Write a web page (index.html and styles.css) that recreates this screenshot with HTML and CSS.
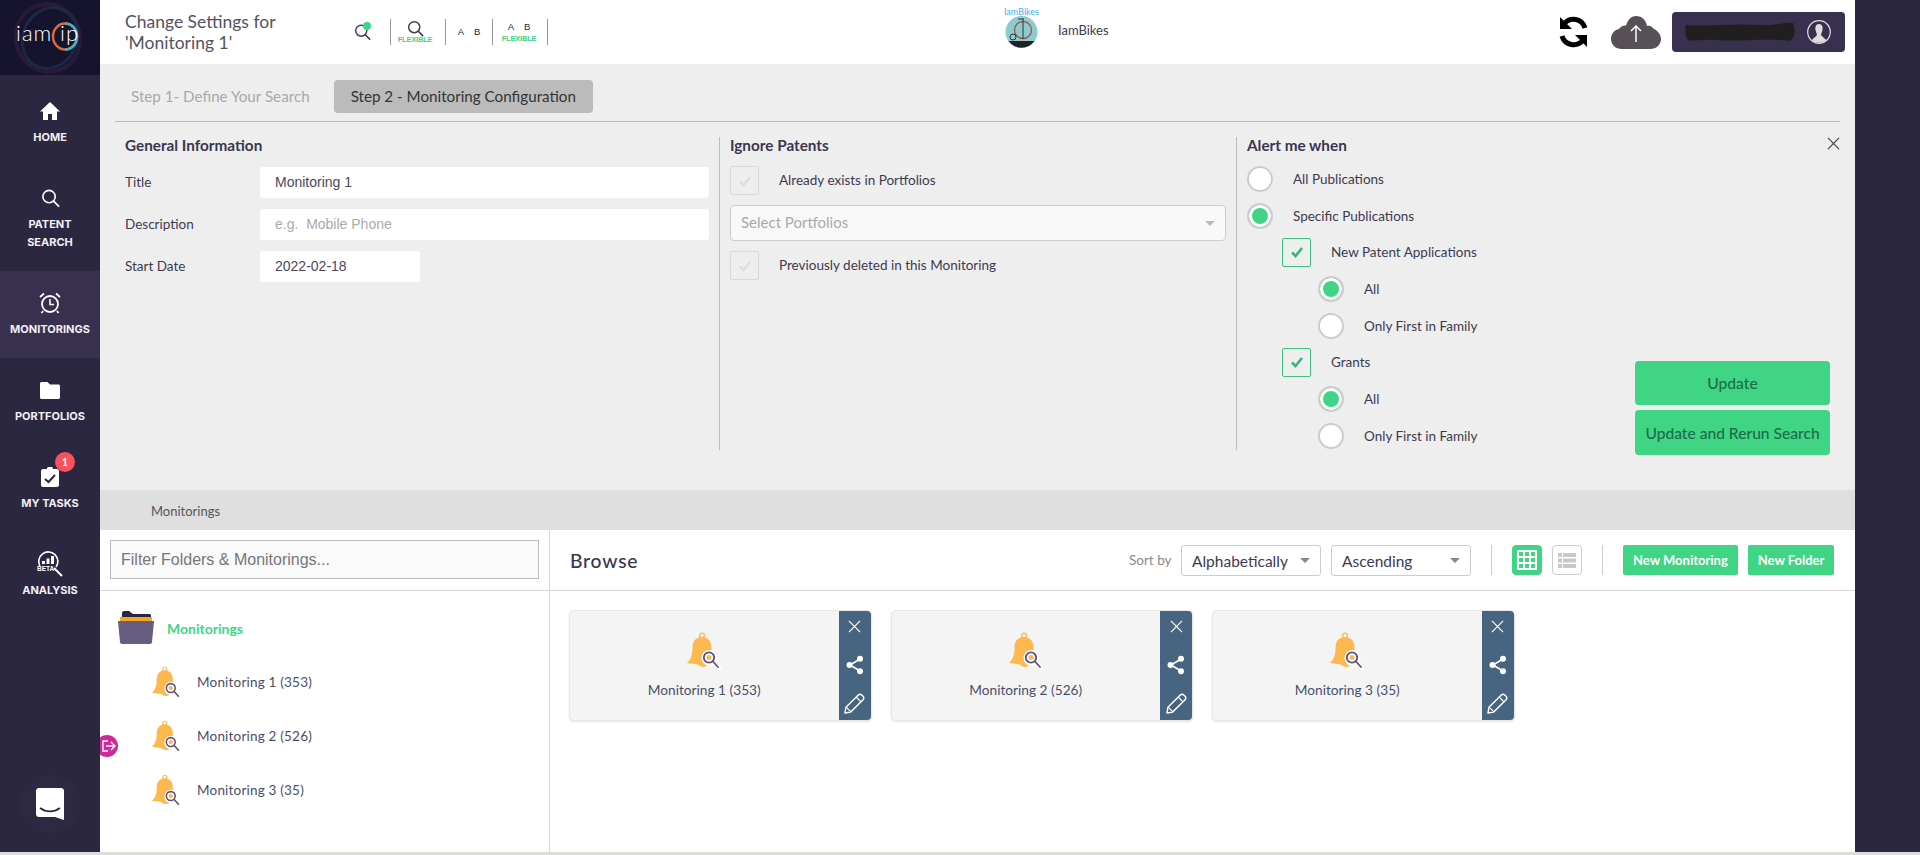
FILE: index.html
```html
<!DOCTYPE html>
<html lang="en">
<head>
  <meta charset="UTF-8">
  <title>Change Settings for 'Monitoring 1'</title>
  <link rel="stylesheet" href="styles.css">
</head>
<body>
  <!-- shared icons -->
  <svg class="defs" width="0" height="0">
    <symbol id="i-bell" viewBox="0 0 34 38">
      <circle cx="15" cy="3.5" r="2.4" fill="none" stroke="#fdb94f" stroke-width="1.4"/>
      <path d="M15 5C8 5 5.5 10 5.5 16C5.500 23 4 27 0 31L11 32.500C13 35.500 19 35.500 21 33L30 28C26 24 24.500 20 24.500 16C24.500 10 22 5 15 5Z" fill="#fdb94f"/>
      <circle cx="22.500" cy="26" r="8" fill="#fff"/>
      <path d="M27 31L32 36" stroke="#fff" stroke-width="4" stroke-linecap="round"/>
      <circle cx="22" cy="25.500" r="5.200" fill="none" stroke="#5c4f78" stroke-width="1.800"/>
      <circle cx="22" cy="25.500" r="2.500" fill="#fdb94f"/>
      <path d="M26 29.500L31 35" stroke="#5c4f78" stroke-width="1.800" stroke-linecap="round"/>
    </symbol>
    <symbol id="i-check" viewBox="0 0 14 14">
      <path d="M2 7.500L5.500 11L12 3" fill="none" stroke="currentColor" stroke-width="2.600"/>
    </symbol>
    <symbol id="i-search" viewBox="0 0 20 20">
      <circle cx="8.500" cy="8.500" r="6.500" fill="none" stroke="currentColor" stroke-width="1.700"/>
      <path d="M13 13L19 19" stroke="currentColor" stroke-width="1.900"/>
    </symbol>
    <symbol id="i-close" viewBox="0 0 14 14">
      <path d="M1 1L13 13M13 1L1 13" stroke="currentColor" stroke-width="1.300"/>
    </symbol>
    <symbol id="i-share" viewBox="0 0 18 20">
      <path d="M14 4L4 10L14 16" fill="none" stroke="currentColor" stroke-width="1.500"/>
      <circle cx="14" cy="3.800" r="3" fill="currentColor"/>
      <circle cx="3.500" cy="10" r="3" fill="currentColor"/>
      <circle cx="14" cy="16.200" r="3" fill="currentColor"/>
    </symbol>
    <symbol id="i-pencil" viewBox="0 0 22 22">
      <path d="M2 15L15 2C16 1 17.500 1 18.500 2L20 3.500C21 4.500 21 6 20 7L7 20L1 21Z" fill="none" stroke="currentColor" stroke-width="1.500" stroke-linejoin="round"/>
      <path d="M13 4.500L17.500 9M2.500 15L7 19.500" stroke="currentColor" stroke-width="1.300"/>
    </symbol>
  </svg>

  <div class="app">
    <aside class="sidebar">
      <div class="logo">
        <svg width="100" height="75" viewBox="0 0 100 75">
          <ellipse cx="48" cy="38" rx="32" ry="34" fill="none" stroke="#3b2340" stroke-width="4" opacity="0.55" transform="rotate(-20 48 38)"/>
          <ellipse cx="50" cy="38" rx="27" ry="31" fill="none" stroke="#1f2c4a" stroke-width="3" opacity="0.8" transform="rotate(25 50 38)"/>
          <ellipse cx="65" cy="36.500" rx="12" ry="13" fill="none" stroke="#d9673f" stroke-width="2.500"/>
          <path d="M65 23.500C72 23.500 77 29 77 36.500C77 44 72 49.500 65 49.500" fill="none" stroke="#36b6c4" stroke-width="2.500"/>
          <text x="16" y="41" class="logo-text">iam</text>
          <text x="60" y="41" class="logo-text">ip</text>
        </svg>
      </div>
      <nav class="nav">
        <a class="nav-item">
          <span class="nav-icon"><svg width="20" height="20" viewBox="0 0 20 20"><path d="M10 1L0 10.500H3V19H8V13H12V19H17V10.500H20Z" fill="#fff"/></svg></span>
          <span class="nav-label">HOME</span>
        </a>
        <a class="nav-item">
          <span class="nav-icon nav-white"><svg width="19" height="20"><use href="#i-search"/></svg></span>
          <span class="nav-label">PATENT<br>SEARCH</span>
        </a>
        <a class="nav-item active">
          <span class="nav-icon"><svg width="22" height="22" viewBox="0 0 22 22"><circle cx="11" cy="12" r="8" fill="none" stroke="#fff" stroke-width="1.800"/><path d="M11 7V12.500H15" fill="none" stroke="#fff" stroke-width="1.500"/><path d="M1 5L5 1.500M21 5L17 1.500M4 19L2.500 21M18 19L19.500 21" stroke="#fff" stroke-width="1.800"/></svg></span>
          <span class="nav-label">MONITORINGS</span>
        </a>
        <a class="nav-item">
          <span class="nav-icon"><svg width="20" height="17" viewBox="0 0 20 17"><path d="M1.500 0H7.500L10 2.500H18.500C19.300 2.500 20 3.200 20 4V15.500C20 16.300 19.300 17 18.500 17H1.500C0.700 17 0 16.300 0 15.500V1.500C0 0.700 0.700 0 1.500 0Z" fill="#fff"/></svg></span>
          <span class="nav-label">PORTFOLIOS</span>
        </a>
        <a class="nav-item">
          <span class="nav-icon"><svg width="18" height="20" viewBox="0 0 18 20"><path d="M2 2H6A3 2.500 0 0 1 12 2H16C17 2 18 3 18 4V18C18 19 17 20 16 20H2C1 20 0 19 0 18V4C0 3 1 2 2 2Z" fill="#fff"/><path d="M4 12L7.500 15L14 8" fill="none" stroke="#2c2740" stroke-width="2"/></svg></span>
          <span class="nav-label">MY TASKS</span>
          <span class="badge">1</span>
        </a>
        <a class="nav-item">
          <span class="nav-icon"><svg width="26" height="26" viewBox="0 0 26 26"><path d="M3 15A9.500 9.500 0 1 1 19 16" fill="none" stroke="#fff" stroke-width="1.600"/><path d="M17 17L25 25" stroke="#fff" stroke-width="2"/><rect x="5" y="10" width="3" height="3" fill="#fff"/><rect x="9.500" y="7.500" width="3" height="5.500" fill="#fff"/><rect x="14" y="5" width="3" height="8" fill="#fff"/><text x="0" y="19.500" class="beta">BETA</text></svg></span>
          <span class="nav-label">ANALYSIS</span>
        </a>
      </nav>
      <div class="chat">
        <svg width="28" height="32" viewBox="0 0 28 32"><path d="M3 0H25C26.700 0 28 1.300 28 3V32L19 29H3C1.300 29 0 27.700 0 26V3C0 1.300 1.300 0 3 0Z" fill="#fff"/><path d="M4 20C10 24.500 18 24.500 24 20" fill="none" stroke="#2c2740" stroke-width="1.600"/></svg>
      </div>
    </aside>

    <div class="content">
      <header class="topbar">
        <div class="page-title">Change Settings for<br>'Monitoring 1'</div>
        <div class="tools">
          <div class="tool tool-first">
            <svg width="17" height="18"><use href="#i-search"/></svg>
            <span class="tool-dot"></span>
          </div>
          <div class="tool">
            <svg width="17" height="17"><use href="#i-search"/></svg>
            <span class="flex-tag">FLEXIBLE</span>
          </div>
          <div class="tool"><span class="ab">A</span><span class="ab">B</span></div>
          <div class="tool tool-ab-flex"><div class="ab-pair"><span class="ab">A</span><span class="ab">B</span></div><span class="flex-tag">FLEXIBLE</span></div>
        </div>
        <div class="tenant">
          <div class="tenant-logo">
            <span class="tenant-small">IamBikes</span>
            <svg width="37" height="32" viewBox="0 0 37 32"><circle cx="18.500" cy="16" r="16" fill="#8ccbd3"/><path d="M5.500 25H31.500A16 16 0 0 1 5.500 25Z" fill="#222"/><circle cx="20" cy="14" r="8.500" fill="none" stroke="#a5562d" stroke-width="1.300"/><path d="M20 3V23M15 3H21" stroke="#333" stroke-width="1"/><circle cx="10" cy="21" r="3" fill="none" stroke="#333" stroke-width="1"/></svg>
          </div>
          <span class="tenant-name">IamBikes</span>
        </div>
        <div class="top-right">
          <svg width="31" height="32" viewBox="0 0 31 32"><path d="M27 12A12 12 0 0 0 6 8" fill="none" stroke="#000" stroke-width="5"/><path d="M2 1V13H14Z" fill="#000"/><path d="M4 20A12 12 0 0 0 25 24" fill="none" stroke="#000" stroke-width="5"/><path d="M29 31V19H17Z" fill="#000"/></svg>
          <svg class="cloud" width="50" height="33" viewBox="0 0 50 33"><path d="M11 33C4 33 0 28 0 23C0 18 3 14 8 13C10 10 13 9 15 9.500C17 3 21 0 25 0C31 0 35 4 36 10C38 9 41 10 43 13C47 15 50 19 50 23C50 28 46 33 39 33Z" fill="#575056"/><path d="M25 26V10M20 15L25 10L30 15" fill="none" stroke="#fff" stroke-width="1.500"/></svg>
          <div class="user-box">
            <svg width="110" height="20" viewBox="0 0 110 20"><path d="M1 3C20 5 50 1 74 3C90 4 100 0 108 1C111 7 110 16 105 19C80 16 50 20 30 18C15 17 6 20 3 18C0 14 0 8 1 3Z" fill="#1f1f1f"/></svg>
            <svg width="24" height="24" viewBox="0 0 24 24"><circle cx="12" cy="12" r="11.300" fill="#393050" stroke="#ddd" stroke-width="1.200"/><path d="M12 4C15 4 16 7 15.500 10C15 12 14 14 14 15C15 17 18 18 19 20C16 23.500 8 23.500 5 20C6 18 9 17 10 15C10 14 9 12 8.500 10C8 7 9 4 12 4Z" fill="#ddd"/></svg>
          </div>
        </div>
      </header>

      <section class="panel">
        <div class="steps">
          <span class="step">Step 1- Define Your Search</span>
          <span class="step step-on">Step 2 - Monitoring Configuration</span>
        </div>
        <div class="columns">
          <div class="col col-info">
            <h4>General Information</h4>
            <div class="form-row"><label>Title</label><input class="text-input" type="text" value="Monitoring 1"></div>
            <div class="form-row"><label>Description</label><input class="text-input" type="text" placeholder="e.g.  Mobile Phone"></div>
            <div class="form-row"><label>Start Date</label><input class="text-input date-input" type="text" value="2022-02-18"></div>
          </div>
          <div class="col col-ignore">
            <h4>Ignore Patents</h4>
            <div class="check-row">
              <span class="box box-off"><svg width="14" height="14"><use href="#i-check"/></svg></span>
              <span class="row-text">Already exists in Portfolios</span>
            </div>
            <div class="portfolio-select">Select Portfolios<span class="caret"></span></div>
            <div class="check-row">
              <span class="box box-off"><svg width="14" height="14"><use href="#i-check"/></svg></span>
              <span class="row-text">Previously deleted in this Monitoring</span>
            </div>
          </div>
          <div class="col col-alert">
            <div>
              <h4>Alert me when</h4>
              <div class="alert-list">
                <div class="check-row"><span class="radio"></span><span>All Publications</span></div>
                <div class="check-row"><span class="radio radio-on"></span><span>Specific Publications</span></div>
                <div class="check-row sub"><span class="box box-on"><svg width="14" height="14"><use href="#i-check"/></svg></span><span>New Patent Applications</span></div>
                <div class="check-row subsub"><span class="radio radio-on"></span><span>All</span></div>
                <div class="check-row subsub"><span class="radio"></span><span>Only First in Family</span></div>
                <div class="check-row sub"><span class="box box-on"><svg width="14" height="14"><use href="#i-check"/></svg></span><span>Grants</span></div>
                <div class="check-row subsub"><span class="radio radio-on"></span><span>All</span></div>
                <div class="check-row subsub"><span class="radio"></span><span>Only First in Family</span></div>
              </div>
            </div>
            <div class="actions">
              <button class="btn-update btn-first">Update</button>
              <button class="btn-update">Update and Rerun Search</button>
            </div>
          </div>
        </div>
        <svg class="panel-close" width="13" height="13"><use href="#i-close"/></svg>
      </section>

      <div class="tabbar">Monitorings</div>

      <section class="browser">
        <div class="tree-pane">
          <div class="filter-wrap"><input class="filter" type="text" placeholder="Filter Folders &amp; Monitorings..."></div>
          <div class="tree">
            <div class="tree-root">
              <svg width="36" height="33" viewBox="0 0 36 33"><path d="M4 7V2C4 1 5 0 6 0H11L15 3H32C33 3 33 4 33 7Z" fill="#2c2740"/><rect x="2" y="6" width="32" height="6" fill="#f5a623"/><path d="M0 10H36L34 31C34 32 33 33 32 33H4C3 33 2 32 2 31Z" fill="#665d80"/></svg>
              <span>Monitorings</span>
            </div>
            <div class="tree-item"><svg width="29" height="33"><use href="#i-bell"/></svg><span>Monitoring 1 (353)</span></div>
            <div class="tree-item"><svg width="29" height="33"><use href="#i-bell"/></svg><span>Monitoring 2 (526)</span></div>
            <div class="tree-item"><svg width="29" height="33"><use href="#i-bell"/></svg><span>Monitoring 3 (35)</span></div>
          </div>
        </div>
        <div class="browse-pane">
          <div class="browse-head">
            <h2>Browse</h2>
            <span class="sort-label">Sort by</span>
            <div class="sort-select">Alphabetically<span class="caret"></span></div>
            <div class="sort-select">Ascending<span class="caret"></span></div>
            <span class="head-sep"></span>
            <span class="view-btn view-on"><svg width="20" height="20" viewBox="0 0 20 20"><path d="M1 1H19V19H1ZM7 1V19M13 1V19M1 7H19M1 13H19" fill="none" stroke="#fff" stroke-width="2"/></svg></span>
            <span class="view-btn"><svg width="18" height="15" viewBox="0 0 18 15"><path d="M0 0H4V4H0ZM5 0H18V4H5ZM0 5.500H4V9.500H0ZM5 5.500H18V9.500H5ZM0 11H4V15H0ZM5 11H18V15H5Z" fill="#c8c8c8"/></svg></span>
            <span class="head-sep"></span>
            <button class="btn-new">New Monitoring</button>
            <button class="btn-new">New Folder</button>
          </div>
          <div class="cards">
            <div class="card">
              <div class="card-main"><svg width="34" height="38"><use href="#i-bell"/></svg><span>Monitoring 1 (353)</span></div>
              <div class="card-side"><svg width="13" height="13"><use href="#i-close"/></svg><svg width="18" height="20"><use href="#i-share"/></svg><svg width="21" height="21"><use href="#i-pencil"/></svg></div>
            </div>
            <div class="card">
              <div class="card-main"><svg width="34" height="38"><use href="#i-bell"/></svg><span>Monitoring 2 (526)</span></div>
              <div class="card-side"><svg width="13" height="13"><use href="#i-close"/></svg><svg width="18" height="20"><use href="#i-share"/></svg><svg width="21" height="21"><use href="#i-pencil"/></svg></div>
            </div>
            <div class="card">
              <div class="card-main"><svg width="34" height="38"><use href="#i-bell"/></svg><span>Monitoring 3 (35)</span></div>
              <div class="card-side"><svg width="13" height="13"><use href="#i-close"/></svg><svg width="18" height="20"><use href="#i-share"/></svg><svg width="21" height="21"><use href="#i-pencil"/></svg></div>
            </div>
          </div>
        </div>
        <span class="drawer-toggle"><svg width="14" height="12" viewBox="0 0 14 12"><path d="M6 1H1V11H6M4 6H13M9 2L13 6L9 10" fill="none" stroke="#fff" stroke-width="1.300"/></svg></span>
      </section>
    </div>

    <div class="side-band"></div>
  </div>
</body>
</html>
```

FILE: styles.css
```css
* { box-sizing: border-box; }
html, body { margin: 0; height: 100%; overflow: hidden; }
body {
  font-family: "Lato", "Liberation Sans", sans-serif;
  font-size: 13.5px;
  color: #3d3a50;
  background: #e0dad8;
}
.defs { position: absolute; }
h4 {
  margin: 0 0 13px;
  font-size: 15.300px;
  line-height: 16px;
  font-weight: 700;
  color: #3a3650;
}

.app { display: flex; height: 852px; }

/* sidebar */
.sidebar {
  width: 100px;
  flex: none;
  background: #2c2740;
  display: flex;
  flex-direction: column;
  position: relative;
  z-index: 2;
}
.logo { height: 75px; margin-bottom: 4px; background: #15132d; }
.logo svg { display: block; }
.logo-text { font-family: "Lato", sans-serif; font-size: 22px; font-weight: 300; letter-spacing: 1px; fill: #fff; }
.beta { font-family: "Liberation Sans", sans-serif; font-size: 6.500px; font-weight: 700; fill: #fff; }
.nav-item {
  display: flex;
  flex-direction: column;
  align-items: center;
  padding: 20px 0;
  position: relative;
  color: #f1f0f4;
}
.nav-item.active { background: #393050; }
.nav-icon { height: 24px; display: flex; align-items: center; justify-content: center; }
.nav-white { color: #fff; }
.nav-label {
  margin-top: 5px;
  font-family: "Inter", sans-serif;
  font-size: 11px;
  line-height: 18px;
  font-weight: 700;
  text-align: center;
}
.badge {
  position: absolute;
  top: 7px;
  left: 55px;
  width: 20px;
  height: 20px;
  border-radius: 50%;
  background: #f9525d;
  color: #fff;
  font-size: 11px;
  font-weight: 700;
  line-height: 20px;
  text-align: center;
}
.chat {
  width: 60px;
  height: 60px;
  margin: auto 20px 18px;
  border-radius: 50%;
  background: #2e2942;
  display: flex;
  align-items: center;
  justify-content: center;
}

.content { width: 1755px; flex: none; display: flex; flex-direction: column; }
.side-band { flex: 1; background: #2c2740; }

/* top bar */
.topbar {
  height: 64px;
  flex: none;
  background: #fff;
  display: flex;
  align-items: center;
  padding: 0 10px 0 25px;
}
.page-title { width: 229px; font-size: 17.500px; line-height: 21px; color: #55525f; }
.tools { display: flex; height: 26px; }
.tool {
  position: relative;
  width: 47px;
  display: flex;
  align-items: center;
  justify-content: center;
  gap: 10px;
  border-right: 1px solid #999;
  color: #3f3d56;
}
.tool:nth-child(2) { width: 55px; flex-direction: column; gap: 0; padding-right: 6px; }
.tool-ab-flex { width: 55px; flex-direction: column; gap: 0; padding-right: 2px; }
.tool-first { width: 37px; justify-content: flex-start; }
.tool-dot {
  position: absolute;
  top: 3px;
  left: 9px;
  width: 8px;
  height: 8px;
  border-radius: 50%;
  background: #40d485;
}
.flex-tag {
  font-family: "Liberation Sans", sans-serif;
  font-size: 7.500px;
  font-weight: 700;
  line-height: 8px;
  letter-spacing: -0.200px;
  color: #40d485;
  margin-top: -1px;
  white-space: nowrap;
}
.ab-pair { display: flex; gap: 10px; margin-bottom: 3px; }
.ab { font-family: "Liberation Sans", sans-serif; font-size: 9.500px; line-height: 12px; color: #22284a; }
.tenant { margin-left: 455px; display: flex; align-items: center; gap: 18px; }
.tenant-logo { width: 37px; display: flex; flex-direction: column; align-items: center; margin-bottom: 9px; }
.tenant-logo svg { display: block; }
.tenant-small { font-size: 9px; line-height: 9px; color: #49aef0; white-space: nowrap; }
.tenant-name { font-size: 13px; color: #3d3a50; margin-top: -4px; }
.top-right { margin-left: auto; display: flex; align-items: center; }
.cloud { margin: 0 11px 0 22px; }
.user-box {
  width: 173px;
  height: 40px;
  background: #393050;
  border-radius: 4px;
  display: flex;
  align-items: center;
  justify-content: space-between;
  padding: 0 14px 0 13px;
}

/* settings panel */
.panel {
  position: relative;
  height: 426px;
  flex: none;
  background: #eee;
  padding: 16px 15px 0;
}
.steps {
  display: flex;
  align-items: center;
  height: 33px;
  padding-left: 1px;
  font-size: 15.200px;
}
.step { padding: 0 15px; line-height: 33px; color: #a9a9a9; white-space: nowrap; }
.step-on {
  margin-left: 9px;
  padding: 0 17px;
  background: #bbb;
  border-radius: 4px;
  color: #333;
}
.columns {
  display: grid;
  grid-template-columns: 604px 517px 604px;
  height: 329px;
  margin-top: 8px;
  border-top: 1px solid #bbb;
  padding-top: 15px;
}
.col { height: 313px; font-size: 13.500px; }
.col-info { padding: 0 10px; }
.col-ignore { padding: 0 10px; border-left: 1px solid #bbb; }
.col-alert {
  padding: 0 10px;
  border-left: 1px solid #bbb;
  display: flex;
  justify-content: space-between;
}
.form-row { display: flex; align-items: center; margin-bottom: 11px; }
.col-info h4 { margin-bottom: 14px; }
.form-row label { width: 135px; flex: none; padding-bottom: 2px; }
.text-input {
  width: 449px;
  height: 31px;
  border: 0;
  border-radius: 3px;
  background: #fff;
  padding: 0 15px 2px;
  font-family: "Liberation Sans", sans-serif;
  font-size: 14px;
  color: #4a4860;
}
.text-input::placeholder { color: #aaa; }
.date-input { width: 160px; }
.check-row { display: flex; align-items: center; gap: 20px; }
.row-text { padding-bottom: 2px; }
.col-ignore .check-row { height: 29px; }
.box {
  width: 29px;
  height: 29px;
  flex: none;
  border-radius: 2px;
  display: flex;
  align-items: center;
  justify-content: center;
}
.box-off { border: 1px solid #d8d8d8; color: #dfdfdf; }
.box-on { border: 1px solid #3fc07f; color: #35b873; }
.portfolio-select {
  position: relative;
  height: 36px;
  margin: 10px 0;
  padding-left: 10px;
  background: #f9f9f9;
  border: 1px solid #ccc;
  border-radius: 4px;
  font-size: 15px;
  line-height: 32px;
  color: #aaa;
}
.caret {
  position: absolute;
  right: 10px;
  top: 50%;
  margin-top: -2px;
  border: 5px solid transparent;
  border-top-color: #bbb;
  border-bottom: 0;
}
.alert-list { display: flex; flex-direction: column; gap: 10.700px; }
.radio {
  width: 26px;
  height: 26px;
  flex: none;
  border-radius: 50%;
  background: #fff;
  border: 2px solid #ccc;
}
.radio-on { background: #40d485; box-shadow: inset 0 0 0 3px #fff; }
.sub { margin-left: 35px; }
.subsub { margin-left: 71px; }
.col-alert .check-row { gap: 20px; height: 26px; }
.col-alert .sub .box { margin: -2px 0; }
.actions {
  width: 195px;
  align-self: flex-end;
  margin-bottom: -5px;
  display: flex;
  flex-direction: column;
  gap: 5px;
}
.btn-update {
  height: 45px;
  border: 0;
  border-radius: 4px;
  background: #40d485;
  color: #1f6b49;
  font-family: "Lato", sans-serif;
  font-size: 15.600px;
  font-weight: 500;
}
.btn-first { height: 44px; }
.panel-close { position: absolute; top: 73px; right: 15px; color: #444; }

.tabbar {
  height: 40px;
  flex: none;
  background: #dfdfdf;
  padding-left: 51px;
  font-size: 13px;
  line-height: 42px;
  color: #555;
}

/* folders and cards */
.browser { position: relative; flex: 1; display: flex; background: #fff; }
.tree-pane { width: 450px; flex: none; border-right: 1px solid #d8d8d8; }
.filter-wrap { height: 61px; padding: 10px 10px 0; border-bottom: 1px solid #d8d8d8; }
.filter {
  width: 429px;
  height: 39px;
  padding: 0 10px;
  border: 1px solid #bbb;
  background: #fafafa;
  font-family: "Liberation Sans", sans-serif;
  font-size: 16px;
}
.filter::placeholder { color: #777; }
.tree { padding: 20px 0 0 18px; }
.tree-root {
  display: flex;
  align-items: center;
  gap: 13px;
  height: 33px;
  margin-bottom: 11px;
  padding-top: 1px;
  font-size: 14px;
  font-weight: 700;
  color: #40d485;
}
.tree-root svg { margin-top: -1px; }
.tree-item {
  display: flex;
  align-items: center;
  gap: 16px;
  height: 54px;
  padding-left: 34px;
  font-size: 13.500px;
  letter-spacing: 0.200px;
  color: #47506a;
}
.browse-pane { flex: 1; min-width: 0; }
.browse-head {
  display: flex;
  align-items: center;
  height: 61px;
  padding: 0 0 0 20px;
  border-bottom: 1px solid #d8d8d8;
}
.browse-head h2 { margin: 0; font-size: 19.300px; font-weight: 500; letter-spacing: 0.800px; color: #3a3650; width: 559px; flex: none; }
.sort-label { width: 52px; flex: none; font-size: 13.500px; color: #888; white-space: nowrap; }
.sort-select {
  position: relative;
  width: 140px;
  height: 31px;
  margin-right: 10px;
  padding-left: 10px;
  border: 1px solid #ccc;
  border-radius: 3px;
  font-size: 15.500px;
  line-height: 31px;
  color: #3d3a50;
}
.sort-select .caret { border-top-color: #888; }
.head-sep { width: 1px; height: 30px; margin: 0 20px 0 10px; background: #ccc; }
.view-btn {
  width: 30px;
  height: 30px;
  margin-right: 10px;
  border: 1px solid #ccc;
  border-radius: 4px;
  display: flex;
  align-items: center;
  justify-content: center;
}
.view-on { background: #40d485; border-color: #40d485; }
.btn-new {
  height: 30px;
  margin-right: 10px;
  padding: 0 10px;
  border: 0;
  border-radius: 2px;
  background: #40d485;
  color: #fff;
  font-family: "Lato", sans-serif;
  font-size: 13px;
  font-weight: 700;
  white-space: nowrap;
}
.cards { display: flex; gap: 19px; padding: 19px 0 0 19px; }
.card {
  width: 302.500px;
  height: 111px;
  flex: none;
  display: flex;
  background: #f4f4f4;
  border: 1px solid #e8e8e8;
  border-radius: 5px;
  overflow: hidden;
  box-shadow: 0 1px 2px rgba(0,0,0,0.12);
}
.card-main {
  flex: 1;
  display: flex;
  flex-direction: column;
  align-items: center;
  padding-top: 21px;
  gap: 11px;
  font-size: 13.700px;
  color: #47506a;
}
.card-side {
  width: 32px;
  background: #476480;
  color: #fff;
  display: flex;
  flex-direction: column;
  align-items: center;
  justify-content: space-between;
  padding: 9px 0 6px;
}
.card-side svg:nth-child(2) { margin-top: 4px; }
.drawer-toggle {
  position: absolute;
  left: -4px;
  top: 205px;
  width: 22px;
  height: 22px;
  border-radius: 50%;
  background: #cf2a97;
  display: flex;
  align-items: center;
  justify-content: center;
  padding-left: 3px;
}
```
